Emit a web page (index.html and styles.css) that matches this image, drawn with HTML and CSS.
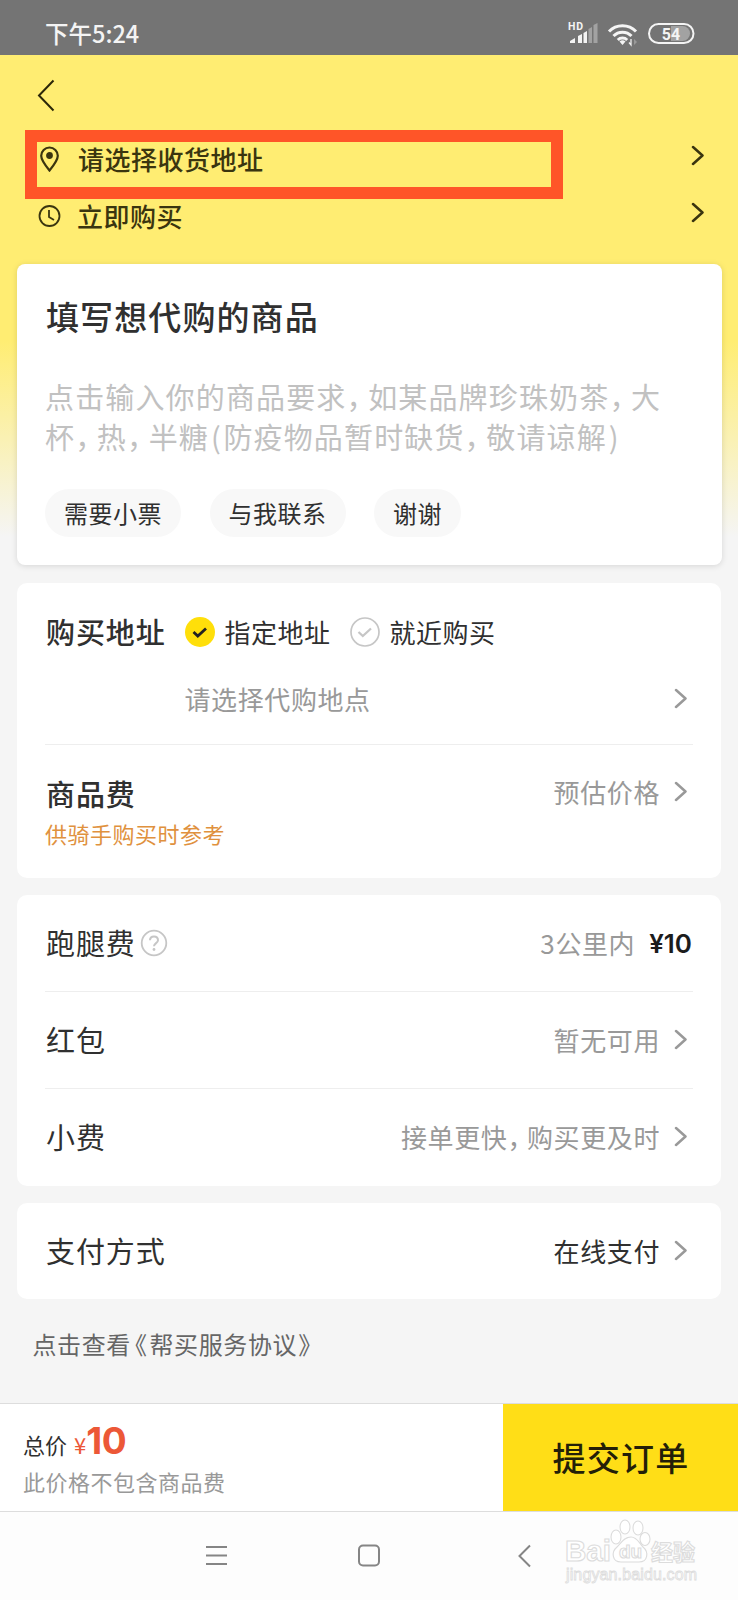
FILE: index.html
```html
<!DOCTYPE html>
<html lang="zh-CN">
<head>
<meta charset="utf-8">
<title>帮买</title>
<link rel="stylesheet" href="styles.css">
</head>
<body>
<svg class="defs" width="0" height="0">
  <symbol id="chev" viewBox="0 0 13 21"><path d="M2 2 11.500 10.500 2 19" fill="none" stroke="currentColor" stroke-width="2.500" stroke-linecap="round" stroke-linejoin="round"/></symbol>
</svg>
<div class="status">
  <span class="time">下午5:24</span>
  <svg class="status-icons" width="130" height="30" viewBox="0 0 130 30">
    <text x="0" y="15" class="hd">HD</text>
    <path d="M2 28v-2l5-3v5zM10 28v-7l4-2v9zM15.500 28V18l3.500-2v12z" fill="#f4f4f4"/>
    <path d="M20.500 28V14l3.500-2v16zM25.500 28V10l4-2v20z" fill="#a2a2a2"/>
    <g fill="none" stroke="#f4f4f4" stroke-width="3"><path d="M41 16.500a18.500 18.500 0 0 1 27 0M45.500 21a12.500 12.500 0 0 1 18 0M49.800 25a6.800 6.800 0 0 1 9.400 0"/></g>
    <path d="M51.500 26.500q3-2.500 6 0l-3 3.500z" fill="#f4f4f4"/>
    <path d="M63 24v6l-2-2.500" fill="none" stroke="#eee" stroke-width="1.300"/><path d="m66 24 3 3-3 3z" fill="#999"/>
    <rect x="81" y="9" width="44.500" height="19" rx="9.500" fill="#747474" stroke="#f4f4f4" stroke-width="2"/>
    <path d="M103 11h11.500a7.500 7.500 0 0 1 0 15H103z" fill="#a2a2a2"/>
    <text x="103" y="24.500" text-anchor="middle" class="batt">54</text>
  </svg>
</div>
<main class="page">
  <header class="header">
    <svg class="back" width="18" height="33" viewBox="0 0 18 33"><path d="M16.500 1.500 2 16.500l14.500 15" fill="none" stroke="#2b2708" stroke-width="2"/></svg>
    <div class="head-row address">
      <svg class="lead" width="24" height="26" viewBox="0 0 24 26" fill="none" stroke="#3a350f" stroke-width="2.200"><path d="M12.500 24.500C7.500 18.500 4.200 14 4.200 9.800a8.300 8.300 0 0 1 16.600 0c0 4.200-3.300 8.700-8.300 14.700z"/><circle cx="12.500" cy="9.500" r="2.300" fill="#3a350f"/></svg>
      <span class="head-text">请选择收货地址</span>
      <svg class="chev" width="13" height="21"><use href="#chev"/></svg>
      <div class="mark"></div>
    </div>
    <div class="head-row when">
      <svg class="lead" width="24" height="24" viewBox="0 0 24 24" fill="none" stroke="#3a350f" stroke-width="1.800"><circle cx="12.500" cy="12" r="10"/><path d="M12 6v7l5 3"/></svg>
      <span class="head-text">立即购买</span>
      <svg class="chev" width="13" height="21"><use href="#chev"/></svg>
    </div>
  </header>

  <section class="card goods">
    <h1 class="title">填写想代购的商品</h1>
    <p class="hint">点击输入你的商品要求<i class="comma">，</i>如某品牌珍珠奶茶<i class="comma">，</i>大<br>杯<i class="comma">，</i>热<i class="comma">，</i>半糖<i class="paren">(</i>防疫物品暂时缺货<i class="comma">，</i>敬请谅解<i class="paren">)</i></p>
    <div class="chips"><span class="chip">需要小票</span><span class="chip">与我联系</span><span class="chip">谢谢</span></div>
  </section>

  <section class="card place">
    <div class="choices">
      <span class="label strong">购买地址</span>
      <svg width="30" height="30" viewBox="0 0 30 30"><circle cx="15" cy="15" r="15" fill="#ffdf0a"/><path d="m8.500 15 4.300 4 8.200-7.500" fill="none" stroke="#222" stroke-width="2.800"/></svg>
      <span class="choice">指定地址</span>
      <svg width="30" height="30" viewBox="0 0 30 30"><circle cx="15" cy="15" r="14" fill="none" stroke="#c6c6c6" stroke-width="1.700"/><path d="m8.500 15 4.300 4 8.200-7.500" fill="none" stroke="#c6c6c6" stroke-width="2.300"/></svg>
      <span class="choice">就近购买</span>
    </div>
    <div class="row where"><span class="value">请选择代购地点</span><svg class="chev" width="13" height="21"><use href="#chev"/></svg></div>
    <div class="row price">
      <div class="stack"><span class="label strong">商品费</span><span class="note">供骑手购买时参考</span></div>
      <span class="value">预估价格</span><svg class="chev" width="13" height="21"><use href="#chev"/></svg>
    </div>
  </section>

  <section class="card fees">
    <div class="row"><span class="label">跑腿费</span>
      <svg class="help" width="28" height="28" viewBox="0 0 28 28"><circle cx="14" cy="14" r="12.300" fill="none" stroke="#c6c6c6" stroke-width="1.800"/><path d="M10 11.300c0-5.200 8-5.200 8 0 0 2.700-4 3-4 6" fill="none" stroke="#c6c6c6" stroke-width="2"/><circle cx="14" cy="20.500" r="1.400" fill="#c6c6c6"/></svg>
      <span class="value">3公里内</span><span class="amount">¥10</span></div>
    <div class="row"><span class="label">红包</span><span class="value">暂无可用</span><svg class="chev" width="13" height="21"><use href="#chev"/></svg></div>
    <div class="row"><span class="label">小费</span><span class="value">接单更快<i class="comma">，</i>购买更及时</span><svg class="chev" width="13" height="21"><use href="#chev"/></svg></div>
  </section>

  <section class="card pay">
    <div class="row"><span class="label">支付方式</span><span class="value dark">在线支付</span><svg class="chev" width="13" height="21"><use href="#chev"/></svg></div>
  </section>
  <p class="terms">点击查看<span class="open">《</span>帮买服务协议<span class="close">》</span></p>
</main>
<footer class="checkout">
  <div class="total">
    <div class="sum"><span>总价</span><span class="yen">¥</span><span class="big">10</span></div>
    <div class="sub">此价格不包含商品费</div>
  </div>
  <button class="submit">提交订单</button>
</footer>
<nav class="nav">
  <svg width="738" height="88" viewBox="0 0 738 88" fill="none" stroke="#858585" stroke-width="2">
    <path d="M206 35h21M206 43.500h21M206 52h21"/>
    <rect x="359" y="33.500" width="20" height="20" rx="4"/>
    <path d="M530 33.500 519.500 44 530 54.500"/>
  </svg>
  <svg class="watermark" width="145" height="75" viewBox="0 0 145 75">
    <g fill="#fff" stroke="#dcdcdc" stroke-width="1.100">
      <text x="5" y="46" class="wm-main" textLength="46" lengthAdjust="spacingAndGlyphs">Bai</text>
      <text x="91" y="45" class="wm-cn">经验</text>
      <ellipse cx="56" cy="22" rx="5" ry="7"/><ellipse cx="65" cy="12" rx="5" ry="7"/><ellipse cx="78" cy="13" rx="5" ry="7"/><ellipse cx="85" cy="24" rx="5" ry="6.500"/>
      <path d="M71 22c6 0 8 6 12 10 6 5 5 15-4 15h-18c-9 0-10-10-4-15 4-4 7-10 14-10z"/>
      <text x="59" y="43" class="wm-du">du</text>
      <text x="6" y="65" class="wm-url" textLength="131">jingyan.baidu.com</text>
    </g>
  </svg>
</nav>
</body>
</html>
```

FILE: styles.css
```css
* { box-sizing: border-box; }
body { margin: 0; width: 738px; height: 1600px; overflow: hidden; display: flex; flex-direction: column; background: #f5f5f5; color: #303030; font-family: "Noto Sans CJK SC", "Noto Sans", sans-serif; }
h1, p { margin: 0; }
i { font-style: normal; }
svg { flex: none; display: block; }
.defs { position: absolute; }

.status { height: 54.500px; flex: none; background: #747474; color: #f4f4f4; display: flex; justify-content: space-between; padding: 15px 40px 0 45px; }
.time { font-size: 23.500px; line-height: 37px; font-weight: 500; }
.status-icons { overflow: visible; }
.hd { font: 700 10.500px Roboto, sans-serif; fill: #f4f4f4; letter-spacing: .8px; }
.batt { font: 700 16px Roboto, sans-serif; fill: #f4f4f4; }

.page { height: 1348.500px; flex: none; background: linear-gradient(#ffed72 0, #ffed72 285px, #f5f5f5 482px); }
.header { height: 209.500px; padding: 24.500px 34px 0 37px; display: flex; flex-direction: column; color: #3a350f; }
.head-row { display: flex; align-items: center; height: 57px; position: relative; font-size: 26px; }
.address { margin-top: 17px; }
.lead { margin-top: 3px; }
.head-text { letter-spacing: .5px; margin-left: 17px; line-height: 36px; padding-top: 3px; font-weight: 500; flex: 1; }
.when .head-text { margin-left: 16px; }
.head-row .chev { margin-bottom: 4px; }
.mark { position: absolute; left: -12.500px; top: 1px; width: 538.500px; height: 69px; border: 12.500px solid #ff5528; }

.card { background: #fff; border-radius: 10px; margin: 0 17px 17px; padding: 0 28px; }
.goods { height: 301px; margin: 0 16.500px 18px; border-radius: 8px; padding: 27.500px 28.500px 0; box-shadow: 0 1px 6px rgba(0, 0, 0, .13); }
.title { font-size: 33px; line-height: 48px; font-weight: 500; letter-spacing: 1.100px; padding-left: 1px; }
.hint { margin-top: 36px; font-size: 29px; line-height: 40px; letter-spacing: 1.150px; color: #c1c1c1; white-space: nowrap; }
.comma { font-feature-settings: "halt"; margin-right: 6px; }
.paren { margin: 0 1.500px 0 2px; }
.chips { display: flex; gap: 28.500px; margin-top: 33px; }
.chip { height: 48px; border-radius: 24px; background: #f8f8f8; font-size: 24px; line-height: 48px; letter-spacing: .5px; padding: 0 19px; }

.place { height: 295px; }
.choices { display: flex; align-items: center; padding-top: 20px; height: 77px; }
.label { font-size: 29px; line-height: 42px; letter-spacing: .9px; padding-left: 1px; margin-top: -3px; }
.strong { font-weight: 500; }
.choices .label { width: 139.500px; margin-top: -1px; }
.choice { font-size: 26px; letter-spacing: .5px; margin: -1px 19px 0 10px; }
.row { display: flex; align-items: center; }
.row .chev { margin: -1px 6px 0 14px; color: #999; }
.value { margin-left: auto; margin-top: -2px; font-size: 26px; letter-spacing: .6px; color: #999; }
.dark { color: #303030; }
.where { height: 85px; border-bottom: 1px solid #eee; padding: 0 0 6px 139.500px; }
.where .value { margin-left: 0; flex: 1; }
.price { height: 133px; align-items: flex-start; padding-top: 30px; }
.stack { display: flex; flex-direction: column; }
.note { font-size: 22px; line-height: 32px; letter-spacing: .5px; color: #e0913e; margin-top: 3px; }
.price .value { line-height: 38px; }
.price .chev { margin-top: 6px; }
.fees { height: 291px; }
.fees .row { height: 97px; }
.fees .row:first-child { height: 96px; }
.fees .row + .row { border-top: 1px solid #eee; }
.fees .label { margin-top: -2px; }
.help { margin: 0 0 0 4px; }
.amount { font: 600 26px Inter, sans-serif; color: #1c1c1c; margin: 1px 1px 0 14px; }
.pay { height: 96px; }
.pay .row { height: 96px; }
.terms { font-size: 24px; line-height: 36px; letter-spacing: .6px; color: #666; padding: 10px 32.500px; }
.open { font-feature-settings: "halt"; margin: 0 2px 0 4px; }
.close { font-feature-settings: "halt"; margin-left: 1px; }

.checkout { height: 109px; flex: none; border-top: 1px solid #ddd; border-bottom: 1px solid #ddd; background: #fff; display: flex; }
.total { flex: 1; padding: 13px 0 0 23px; }
.sum { display: flex; align-items: baseline; height: 48px; font-size: 22px; line-height: 48px; }
.yen { color: #ec5837; margin-left: 7px; font-size: 22px; }
.big { color: #ec5837; font: 700 37px/48px Inter, sans-serif; letter-spacing: -.5px; }
.sub { color: #999; font-size: 22px; line-height: 32px; letter-spacing: .5px; }
.submit { width: 235px; border: 0; border-radius: 0; background: #ffde17; color: #241f08; font: 500 33px "Noto Sans CJK SC", sans-serif; letter-spacing: 1.200px; padding: 0 0 1px 1px; }
.nav { height: 88px; flex: none; background: #fdfdfd; position: relative; }
.watermark { position: absolute; left: 560px; top: 3px; }
.wm-main { font: 700 30px "Liberation Sans", sans-serif; }
.wm-cn { font: 700 22px "Noto Sans CJK SC", sans-serif; }
.wm-du { font: 700 19px "Liberation Sans", sans-serif; }
.wm-url { font: 400 16px "Liberation Sans", sans-serif; stroke-width: .8; }
```
